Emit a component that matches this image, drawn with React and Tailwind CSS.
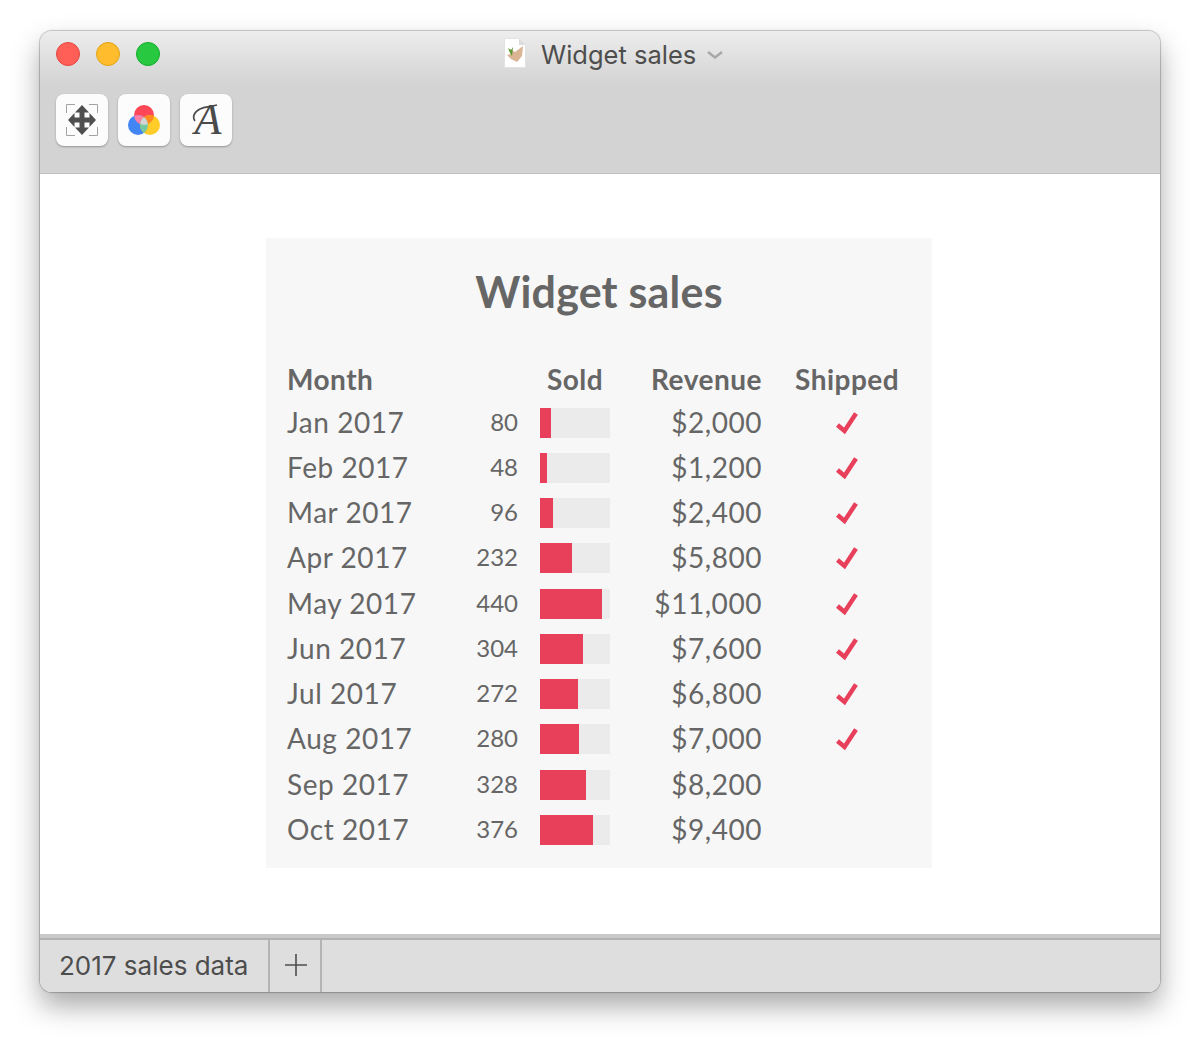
const rows = [
  { month: 'Jan 2017', sold: 80, revenue: '$2,000', shipped: true },
  { month: 'Feb 2017', sold: 48, revenue: '$1,200', shipped: true },
  { month: 'Mar 2017', sold: 96, revenue: '$2,400', shipped: true },
  { month: 'Apr 2017', sold: 232, revenue: '$5,800', shipped: true },
  { month: 'May 2017', sold: 440, revenue: '$11,000', shipped: true },
  { month: 'Jun 2017', sold: 304, revenue: '$7,600', shipped: true },
  { month: 'Jul 2017', sold: 272, revenue: '$6,800', shipped: true },
  { month: 'Aug 2017', sold: 280, revenue: '$7,000', shipped: true },
  { month: 'Sep 2017', sold: 328, revenue: '$8,200', shipped: false },
  { month: 'Oct 2017', sold: 376, revenue: '$9,400', shipped: false },
];

function ToolButton({ children }) {
  return (
    <div className="relative w-[52px] h-[52px] flex items-center justify-center rounded-lg bg-[#fcfcfc] shadow-[0_1px_2px_rgba(0,0,0,0.3)]">
      {children}
    </div>
  );
}

function MoveIcon() {
  return (
    <svg width="32" height="32" viewBox="0 0 32 32">
      <path d="M0.5 9V0.5H9M23 0.5H31.5V9M31.5 23V31.5H23M9 31.5H0.5V23" fill="none" stroke="#a3a3a3" strokeWidth="1" />
      <path
        d="M16 1L23 8.5H18.5V13.5H23.5V9L30 16L23.5 23V18.5H18.5V23.5H23L16 31L9 23.5H13.5V18.5H8.5V23L2 16L8.5 9V13.5H13.5V8.5H9Z"
        fill="#4f4f4f"
      />
    </svg>
  );
}

function ColorsIcon() {
  return (
    <svg width="32" height="30" viewBox="0 0 32 30">
      <defs>
        <clipPath id="red"><circle cx="16" cy="10" r="10" /></clipPath>
        <clipPath id="blue"><circle cx="10" cy="20" r="10" /></clipPath>
        <clipPath id="yellow"><circle cx="22" cy="20" r="10" /></clipPath>
      </defs>
      <circle cx="16" cy="10" r="10" fill="#ff4757" />
      <circle cx="10" cy="20" r="10" fill="#4285f4" />
      <circle cx="22" cy="20" r="10" fill="#ffcc29" />
      <circle cx="10" cy="20" r="10" fill="#ff7fa6" clipPath="url(#red)" />
      <circle cx="22" cy="20" r="10" fill="#ff8a1f" clipPath="url(#red)" />
      <g clipPath="url(#blue)">
        <circle cx="22" cy="20" r="10" fill="#74c9a0" />
        <g clipPath="url(#red)">
          <circle cx="22" cy="20" r="10" fill="#d4d4d4" />
        </g>
      </g>
    </svg>
  );
}

function DocIcon() {
  return (
    <svg width="22" height="30" viewBox="0 0 22 30" className="shrink-0">
      <path d="M0.5 0.5H15L21.5 7V29.5H0.5Z" fill="#ffffff" stroke="#e2e2e2" />
      <path d="M15 0.5V7H21.5Z" fill="#dcdcdc" />
      <path d="M6 11L11 14L19 8L18 18L13 24L7 21L3 17L7 16Z" fill="#d9b594" />
      <path d="M4 10L7 12L9 9L8 18L6 15Z" fill="#5f9a32" />
    </svg>
  );
}

function Check() {
  return (
    <svg width="24" height="24" viewBox="0 0 24 24">
      <path d="M2.5 14L9.5 20L21 2.5" fill="none" stroke="#e83f5b" strokeWidth="4.5" />
    </svg>
  );
}

export default function App() {
  return (
    <div className="h-[1040px] bg-white pt-[31px] pl-[40px] antialiased font-['Inter',sans-serif]">
      <div className="w-[1120px] h-[961px] flex flex-col rounded-xl overflow-hidden shadow-[0_0_1px_1px_rgba(0,0,0,0.22),0_14px_28px_rgba(0,0,0,0.34)]">
        {/* title bar */}
        <div className="h-[143px] shrink-0 bg-[#d3d3d3] border-b border-[#bfbfbf]">
          <div className="h-[54px] flex items-start pl-4 pt-[7px] bg-gradient-to-b from-[#ededed] to-[#d3d3d3]">
            <div className="flex gap-4 mt-[4px]">
              <div className="w-6 h-6 rounded-full bg-[#ff5f57] border border-[#e2463f]" />
              <div className="w-6 h-6 rounded-full bg-[#ffbd2e] border border-[#e1a116]" />
              <div className="w-6 h-6 rounded-full bg-[#28c940] border border-[#12ac28]" />
            </div>
            <div className="ml-[344px] flex items-center text-[#4d4d4d]">
              <DocIcon />
              <span className="ml-[15px] mt-[4px] text-[25.5px] leading-none">Widget sales</span>
              <svg width="16" height="8" viewBox="0 0 16 8" className="ml-[11px] mt-[3px]">
                <path d="M1 1L8 6.5L15 1" fill="none" stroke="#a8a8a8" strokeWidth="2.5" />
              </svg>
            </div>
          </div>
          <div className="flex gap-[10px] pl-4 pt-[9px]">
            <ToolButton><MoveIcon /></ToolButton>
            <ToolButton><ColorsIcon /></ToolButton>
            <ToolButton>
              <span className="ml-[4px] font-['Liberation_Serif',serif] italic text-[44px] leading-none text-[#4a4a4a]">A</span>
              <svg width="30" height="20" viewBox="0 0 30 20" className="absolute left-[10px] top-[9px]">
                <path d="M5 18C2 14 4 9 10 6C15 3.5 20 4 27 2" fill="none" stroke="#4a4a4a" strokeWidth="1.6" />
              </svg>
            </ToolButton>
          </div>
        </div>

        {/* sheet */}
        <div className="flex-1 bg-white pt-[64px] pl-[226px]">
          <div className="w-[666px] h-[630px] bg-[#f7f7f7] font-['Lato',sans-serif] text-[#666666]">
            <h1 className="pt-[27px] text-center text-[43px] leading-[54px] font-bold tracking-[0.2px]">Widget sales</h1>
            <div className="mt-[43px] pl-[22px]">
              <div className="flex items-center h-[34px] text-[28px] font-bold tracking-[0.5px]">
                <div className="w-[252px] -ml-px pr-[-1px]">Month</div>
                <div className="ml-px w-[70px] flex justify-center">Sold</div>
                <div className="w-[152px] text-right">Revenue</div>
                <div className="ml-[33px] w-[104px] text-center">Shipped</div>
              </div>
              <div className="mt-[4px]">
                {rows.map((row) => (
                  <div key={row.month} className="flex items-center h-[45.25px] text-[28px] tracking-[0.55px]">
                    <div className="w-[180px] -ml-px mr-px pb-[2px]">{row.month}</div>
                    <div className="w-[50px] pb-[2px] text-right text-[24px] tracking-normal">{row.sold}</div>
                    <div className="ml-[22px] w-[70px] h-[30px] bg-[#ebebeb]">
                      <div className="h-full bg-[#e83f5b]" style={{ width: row.sold * 0.14 }} />
                    </div>
                    <div className="w-[152px] pb-[2px] text-right">{row.revenue}</div>
                    <div className="ml-[33px] w-[104px] flex justify-center">
                      {row.shipped && <Check />}
                    </div>
                  </div>
                ))}
              </div>
            </div>
          </div>
        </div>

        {/* tabs */}
        <div className="h-[58px] shrink-0 flex flex-col">
          <div className="h-[4px] bg-[#c9c9c9]" />
          <div className="h-[2px] bg-[#b1b1b1]" />
          <div className="flex-1 flex bg-[#dedede] text-[#4d4d4d]">
            <div className="w-[230px] pl-[19px] pb-[2px] flex items-center text-[26px] border-r-2 border-[#b4b4b4]">2017 sales data</div>
            <div className="w-[52px] pl-[2px] pb-[2px] flex items-center justify-center border-r-2 border-[#b4b4b4]">
              <svg width="22" height="22" viewBox="0 0 22 22">
                <path d="M11 0V22M0 11H22" stroke="#4d4d4d" strokeWidth="1.6" />
              </svg>
            </div>
          </div>
        </div>
      </div>
    </div>
  );
}
